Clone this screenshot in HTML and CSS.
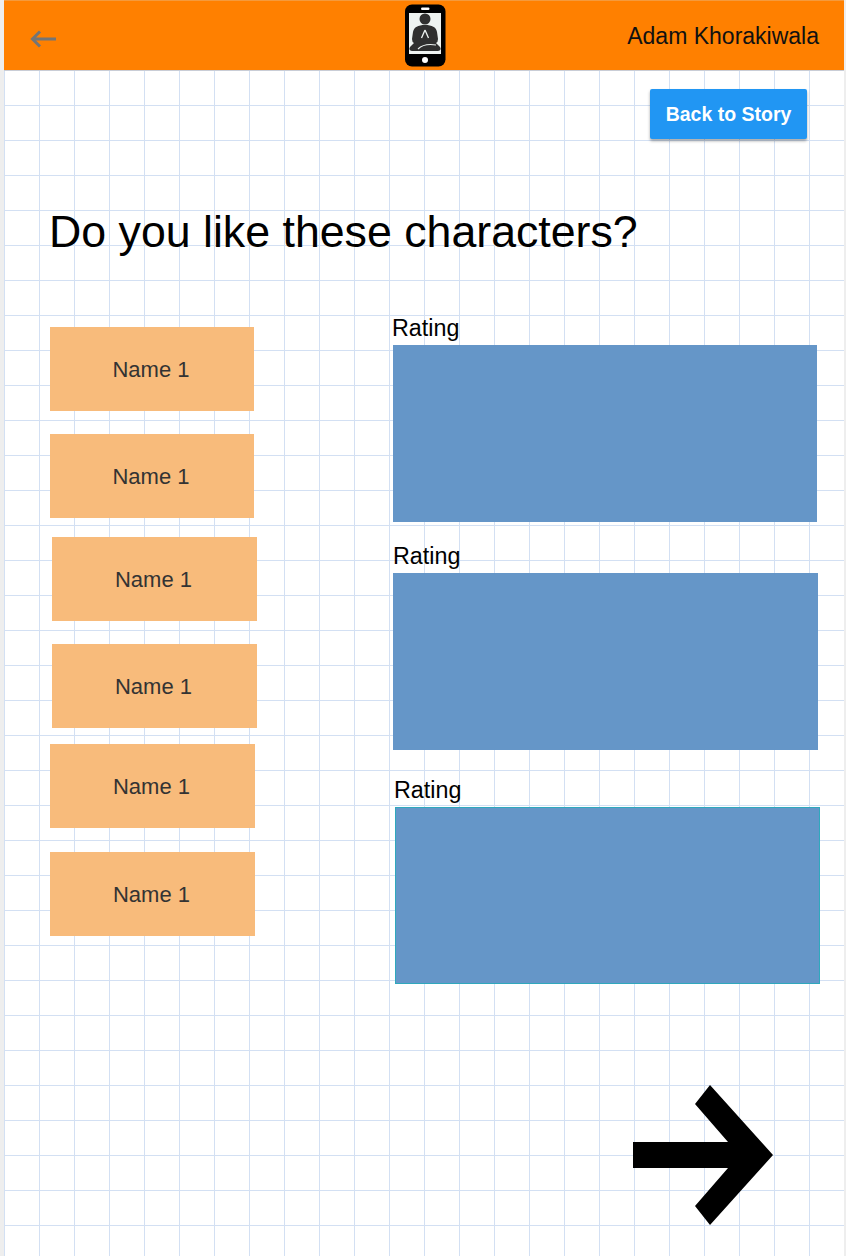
FILE: index.html
```html
<!DOCTYPE html>
<html>
	<head>
		<meta charset="utf-8" />
		<title>Do you like these characters?</title>
		<link rel="stylesheet" href="styles.css">
	</head>
	<body>
		<div class="pagina">
			<header class="barra">
				<svg class="flecha-atras" viewBox="0 0 26 18" width="26" height="18">
					<path d="M10 1.5 L2.5 9 L10 16.5 M2.5 9 H26" fill="none" stroke="#757575" stroke-width="3" />
				</svg>
				<svg class="logo" viewBox="0 0 41 64" width="41" height="64">
					<rect x="0" y="0.5" width="40.500" height="62" rx="7" fill="#000" />
					<rect x="4" y="9" width="32" height="41" fill="#eef3f1" />
					<rect x="16" y="3.500" width="8.500" height="2.500" rx="1.200" fill="#fff" />
					<circle cx="20" cy="56" r="3" fill="#fff" />
					<circle cx="20" cy="15" r="5.500" fill="#2f2f2f" />
					<path d="M20 21 C27 21 31 23 32 28 L33 35 Q33 38 31 39 L35 43 Q37 46 33 47 H7 Q3 46 5 43 L9 39 Q7 38 7 35 L8 28 C9 23 13 21 20 21 Z" fill="#2f2f2f" />
					<path d="M20 26 L16.500 34 M20 26 L23.500 34" fill="none" stroke="#eef3f1" stroke-width="1.300" />
					<path d="M13 45 Q19 39 31 41" fill="none" stroke="#eef3f1" stroke-width="1.100" />
				</svg>
				<span class="usuario">Adam Khorakiwala</span>
			</header>

			<div class="acciones">
				<button class="boton">Back to Story</button>
			</div>

			<h1>Do you like these characters?</h1>

			<div class="contenido">
				<div class="nombres">
					<div class="nombre">Name 1</div>
					<div class="nombre n2">Name 1</div>
					<div class="nombre n3">Name 1</div>
					<div class="nombre n4">Name 1</div>
					<div class="nombre n5">Name 1</div>
					<div class="nombre n6">Name 1</div>
				</div>
				<div class="ratings">
					<div class="rating">
						<p>Rating</p>
						<div class="caja"></div>
					</div>
					<div class="rating r2">
						<p>Rating</p>
						<div class="caja"></div>
					</div>
					<div class="rating r3">
						<p>Rating</p>
						<div class="caja borde"></div>
					</div>
				</div>
			</div>

			<svg class="siguiente" viewBox="0 0 140 141" width="140" height="141">
				<path d="M0 57 H95 L62 19 L77 0 L140 70 L77 140 L62 121 L95 83 H0 Z" fill="#000" />
			</svg>
		</div>
	</body>
</html>
```

FILE: styles.css
```css
* {
	margin: 0;
	padding: 0;
	box-sizing: border-box;
}

html, body {
	height: 100%;
}

body {
	background-color: #eeeeee;
	font-family: "Liberation Sans", Arial, sans-serif;
	overflow: hidden;
}

/*hoja cuadriculada*/
.pagina {
	width: 840px;
	height: 1256px;
	margin-left: 4px;
	background-color: #fff;
	background-image:
		linear-gradient(to right, #d3e0f3 1px, transparent 1px),
		linear-gradient(to bottom, #d3e0f3 1px, transparent 1px);
	background-size: 35px 35px;
	overflow: hidden;
}

.barra {
	height: 71px;
	background-color: #ff8000;
	border-top: 1px solid #f59a3c;
	border-bottom: 1px solid #c9cdd6;
	display: flex;
	align-items: center;
	padding-left: 26px;
	padding-right: 25px;
}

.flecha-atras {
	flex: none;
	margin-top: 7px;
}

.logo {
	flex: none;
	margin-left: 349px;
}

.usuario {
	margin-left: auto;
	font-size: 23px;
	color: #111;
	margin-top: 1px;
	font-weight: normal;
}

.acciones {
	display: flex;
	justify-content: flex-end;
	padding-top: 18px;
	padding-right: 37px;
}

.boton {
	width: 157px;
	height: 50px;
	background-color: #2196f3;
	color: #fff;
	border: 0;
	border-radius: 2px;
	font-family: "Liberation Sans", Arial, sans-serif;
	font-size: 19.5px;
	font-weight: bold;
	box-shadow: 0 2px 3px rgba(0,0,0,0.35);
}

h1 {
	font-size: 44.7px;
	font-weight: normal;
	color: #000;
	margin-top: 67px;
	margin-left: 45px;
	line-height: 52px;
}

.contenido {
	display: flex;
	margin-top: 56px;
	margin-left: 46px;
}

.nombres {
	width: 342px;
	flex: none;
	padding-top: 13px;
}

.nombre {
	width: 204px;
	height: 84px;
	padding-top: 1px;
	padding-right: 2px;
	background-color: #f8bb7b;
	color: #333;
	font-size: 22px;
	display: flex;
	align-items: center;
	justify-content: center;
}

.n2 { margin-top: 23px; }
.n3 { margin-top: 19px; margin-left: 2px; width: 205px; }
.n4 { margin-top: 23px; margin-left: 2px; width: 205px; }
.n5 { margin-top: 16px; width: 205px; }
.n6 { margin-top: 24px; width: 205px; }

.ratings {
	padding-top: 2px;
}

.rating {
	margin-left: 1px;
}

.rating p {
	font-size: 23.3px;
	line-height: 25px;
	color: #000;
	margin-left: -1px;
	margin-bottom: 4px;
}

.caja {
	width: 424px;
	height: 177px;
	background-color: #6596c8;
}

.r2 { margin-top: 22px; }
.r2 p { margin-left: 0; }
.r2 .caja { width: 425px; }
.r3 { margin-top: 28px; margin-left: 2px; }
.r3 p { margin-left: 0; }
.r3 .caja { width: 425px; margin-left: 1px; }

.borde {
	border: 1px solid #2fa8bd;
}

.siguiente {
	display: block;
	margin-left: 629px;
	margin-top: 101px;
}
```
